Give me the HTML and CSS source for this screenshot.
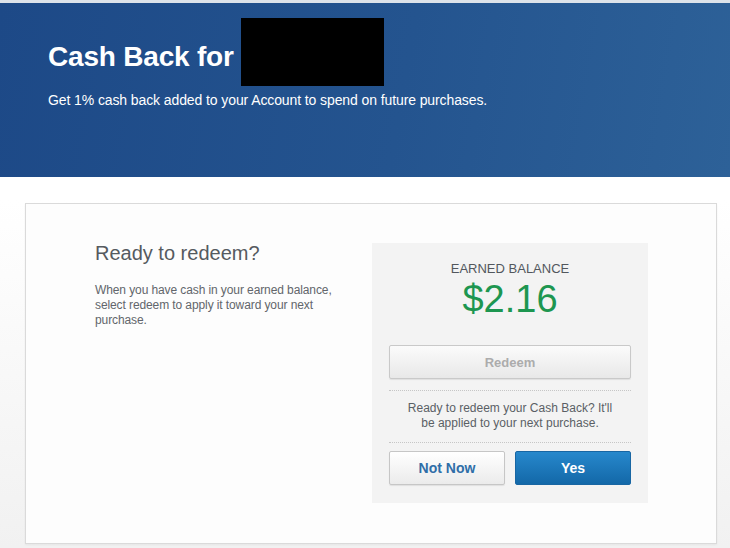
FILE: index.html
```html
<!DOCTYPE html>
<html>
<head>
    <meta charset="UTF-8">
    <title>Cash Back</title>
    <link rel="stylesheet" href="styles.css">
</head>
<body>
    <header class="banner">
        <div class="banner-title">
            <h1>Cash Back for</h1>
            <span class="redacted"></span>
        </div>
        <p class="banner-sub">Get 1% cash back added to your Account to spend on future purchases.</p>
    </header>

    <div class="card">
        <div class="intro">
            <h2>Ready to redeem?</h2>
            <p>When you have cash in your earned balance,<br>select redeem to apply it toward your next<br>purchase.</p>
        </div>

        <div class="balance">
            <div class="balance-label">EARNED BALANCE</div>
            <div class="balance-amount">$2.16</div>
            <button type="button" class="btn btn-redeem">Redeem</button>
            <div class="dots"></div>
            <p class="confirm">Ready to redeem your Cash Back? It'll<br>be applied to your next purchase.</p>
            <div class="dots"></div>
            <div class="actions">
                <button type="button" class="btn btn-later">Not Now</button>
                <button type="button" class="btn btn-yes">Yes</button>
            </div>
        </div>
    </div>
</body>
</html>
```

FILE: styles.css
```css
body {
    margin: 0;
    width: 730px;
    height: 548px;
    overflow: hidden;
    font-family: "Liberation Sans", Arial, Helvetica, sans-serif;
    background: linear-gradient(#ffffff 200px, #f1f1f1 548px);
}

/* banner */
.banner {
    box-sizing: border-box;
    height: 177px;
    border-top: 3px solid #dde3ea;
    padding: 15px 48px 0 48px;
    background: linear-gradient(100deg, #1d4987 0%, #24548f 55%, #2d6198 100%);
    color: #ffffff;
}
.banner-title {
    display: flex;
    align-items: center;
    height: 68px;
}
.banner-title h1 {
    margin: 0;
    padding-top: 9px;
    font-size: 28px;
    line-height: 32px;
    font-weight: bold;
    letter-spacing: -0.2px;
}
.redacted {
    display: block;
    width: 143px;
    height: 68px;
    margin-left: 7px;
    background: #000000;
}
.banner-sub {
    margin: 5px 0 0 0;
    font-size: 14px;
    line-height: 18px;
    letter-spacing: -0.1px;
}

/* card */
.card {
    box-sizing: border-box;
    width: 692px;
    height: 341px;
    margin: 26px 0 0 25px;
    padding: 39px 68px 0 69px;
    background: #fdfdfd;
    border: 1px solid #dadada;
    box-shadow: 0 1px 2px rgba(0, 0, 0, 0.05);
    display: flex;
    justify-content: space-between;
}
.intro h2 {
    margin: 0;
    font-size: 20px;
    line-height: 20px;
    font-weight: normal;
    color: #555a60;
}
.intro p {
    margin: 20px 0 0 0;
    font-size: 12px;
    line-height: 15px;
    letter-spacing: -0.1px;
    color: #62666b;
}

/* balance panel */
.balance {
    box-sizing: border-box;
    width: 276px;
    height: 260px;
    padding: 18px 17px 0 17px;
    background: #f3f3f3;
    text-align: center;
}
.balance-label {
    font-size: 13px;
    line-height: 16px;
    color: #52575d;
}
.balance-amount {
    font-size: 38px;
    line-height: 44px;
    color: #1d9650;
}
.btn {
    box-sizing: border-box;
    height: 34px;
    border-radius: 2px;
    font-family: "Liberation Sans", Arial, Helvetica, sans-serif;
    font-weight: bold;
    cursor: pointer;
}
.btn-redeem {
    width: 100%;
    margin-top: 24px;
    font-size: 13px;
    color: #acacac;
    border: 1px solid #c9c9c9;
    background: linear-gradient(#fbfbfb, #e8e8e8);
    box-shadow: 0 1px 1px rgba(0, 0, 0, 0.08);
}
.dots {
    margin-top: 11px;
    border-top: 1px dotted #c6c6c6;
}
.confirm {
    margin: 10px 0 10px 0;
    font-size: 12px;
    line-height: 15px;
    color: #5a5f65;
}
.actions {
    display: flex;
    gap: 10px;
    margin-top: 8px;
}
.actions .btn {
    flex: 1;
    font-size: 14px;
}
.btn-later {
    color: #2f6ea8;
    border: 1px solid #c6c6c6;
    background: linear-gradient(#ffffff, #ebebeb);
    box-shadow: 0 1px 1px rgba(0, 0, 0, 0.08);
}
.btn-yes {
    color: #ffffff;
    border: 1px solid #1866a3;
    background: linear-gradient(#2788cc, #1368a8);
}
```
